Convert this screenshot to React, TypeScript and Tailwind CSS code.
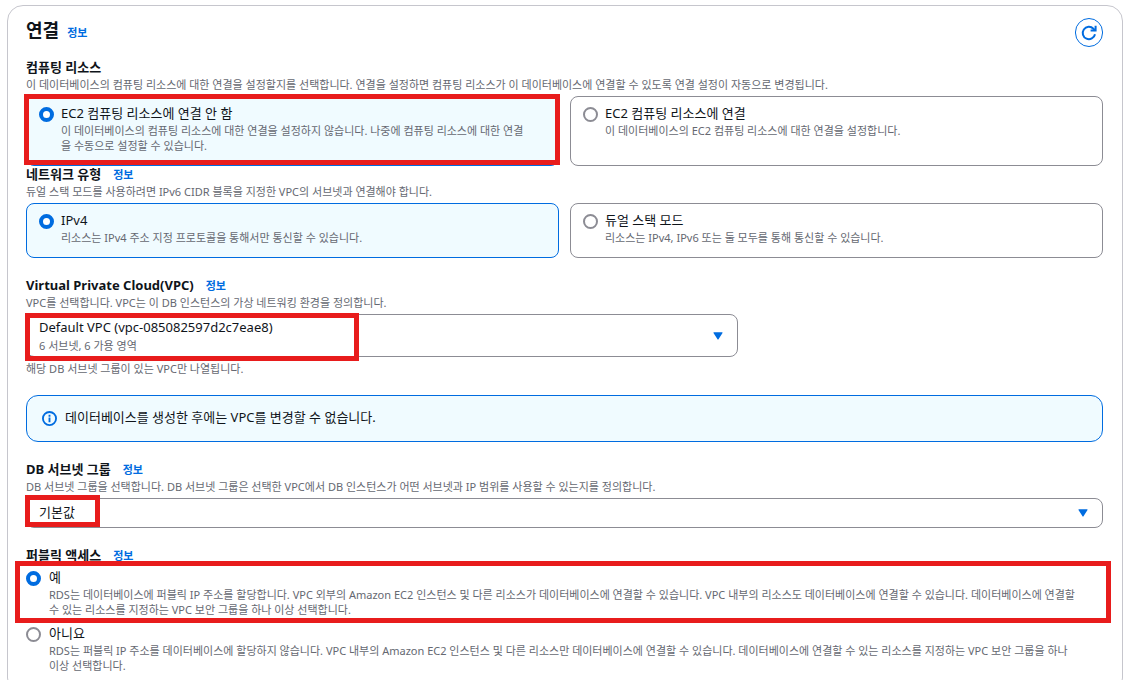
import { useState } from 'react'
import type { ReactNode } from 'react'

function InfoLink({ topic }: { topic: string }) {
  return (
    <a href="#info" aria-label={`${topic} 정보`} className="text-[11px] leading-4 font-bold text-[#006ce0] hover:underline">
      정보
    </a>
  )
}

function FieldHeader({ id, title, htmlFor, info = true, children }: { id: string; title: string; htmlFor?: string; info?: boolean; children?: ReactNode }) {
  return (
    <div>
      <div className="flex h-[18px] items-baseline gap-3 text-[13px] leading-4 font-bold">
        {htmlFor ? <label id={id} htmlFor={htmlFor}>{title}</label> : <span id={id}>{title}</span>}
        {info && <InfoLink topic={title} />}
      </div>
      {children && <p className="text-[11px] leading-[15px] text-[#656871]">{children}</p>}
    </div>
  )
}

// Red box drawn over the part of the form to look at
function Highlight({ className }: { className: string }) {
  return <span aria-hidden="true" className={`pointer-events-none absolute z-10 border-[5px] border-[#e81c1c] ${className}`} />
}

type RadioProps = {
  name: string
  value: string
  title: string
  description: string
  selected: string
  onSelect: (value: string) => void
  tile?: boolean
}

function RadioOption({ name, value, title, description, selected, onSelect, tile }: RadioProps) {
  const checked = selected === value
  const tileStyle = checked
    ? 'gap-[7px] rounded-lg border border-[#006ce0] bg-[#f0fbff] pt-2 pb-3 pl-3'
    : 'gap-[7px] rounded-lg border border-[#8c8c94] bg-white pt-2 pb-3 pl-3'

  return (
    <label className={`flex h-full cursor-pointer items-start pr-7 ${tile ? tileStyle : 'gap-2'}`}>
      <input
        type="radio"
        name={name}
        value={value}
        checked={checked}
        onChange={() => onSelect(value)}
        className="mt-0.5 size-[15px] shrink-0 appearance-none rounded-full border-2 border-[#8c8c94] bg-white checked:border-4 checked:border-[#006ce0]"
      />
      <span className="min-w-0">
        <span className="block pb-0.5 text-[13px] leading-4">{title}</span>
        <span className="block text-[11px] leading-[15px] text-[#656871]">{description}</span>
      </span>
    </label>
  )
}

function Caret() {
  return (
    <svg viewBox="0 0 10 8" aria-hidden="true" className="pointer-events-none col-start-1 row-start-1 mr-[15px] h-2 w-2.5 self-center justify-self-end fill-[#006ce0]">
      <path d="M1 .2h8c.5 0 .8.5.5.9l-4 6.2a.6.6 0 0 1-1 0l-4-6.2C.2.7.5.2 1 .2z" />
    </svg>
  )
}

export default function App() {
  const [compute, setCompute] = useState('none')
  const [network, setNetwork] = useState('ipv4')
  const [access, setAccess] = useState('yes')

  return (
    <main className="bg-white pt-[5px] pr-[3px] pl-[7px] font-['Noto_Sans','Noto_Sans_CJK_KR',sans-serif] text-[#0f141a]">
      <section className="rounded-2xl border border-[#c6c6cd] pt-3 pr-[19px] pb-5 pl-[18px]">
        <header className="flex items-start justify-between">
          <div className="flex items-baseline gap-2">
            <h2 className="text-lg leading-6 font-bold">연결</h2>
            <InfoLink topic="연결" />
          </div>
          <button type="button" aria-label="새로 고침" className="flex h-[29px] w-7 items-center justify-center rounded-full border border-[#006ce0] text-[#006ce0]">
            <svg viewBox="0 0 16 16" fill="none" stroke="currentColor" strokeWidth="2" className="size-4 shrink-0">
              <path d="M14 9.2A6.2 6.2 0 1 1 12.4 3.7L14.4 5.4" />
              <path d="M14.6 .8v4.8H9.6" />
            </svg>
          </button>
        </header>

        <div role="radiogroup" aria-labelledby="compute" className="mt-3">
          <FieldHeader id="compute" title="컴퓨팅 리소스" info={false}>
            이 데이터베이스의 컴퓨팅 리소스에 대한 연결을 설정할지를 선택합니다. 연결을 설정하면 컴퓨팅 리소스가 이 데이터베이스에 연결할 수 있도록 연결 설정이 자동으로 변경됩니다.
          </FieldHeader>
          <div className="mt-1 grid grid-cols-2 gap-[11px]">
            <div className="relative">
              <RadioOption
                tile
                name="compute"
                value="none"
                title="EC2 컴퓨팅 리소스에 연결 안 함"
                description="이 데이터베이스의 컴퓨팅 리소스에 대한 연결을 설정하지 않습니다. 나중에 컴퓨팅 리소스에 대한 연결을 수동으로 설정할 수 있습니다."
                selected={compute}
                onSelect={setCompute}
              />
              <Highlight className="-top-0.5 -right-px bottom-px -left-0.5" />
            </div>
            <RadioOption
              tile
              name="compute"
              value="ec2"
              title="EC2 컴퓨팅 리소스에 연결"
              description="이 데이터베이스의 EC2 컴퓨팅 리소스에 대한 연결을 설정합니다."
              selected={compute}
              onSelect={setCompute}
            />
          </div>
        </div>

        <div role="radiogroup" aria-labelledby="network">
          <FieldHeader id="network" title="네트워크 유형">
            듀얼 스택 모드를 사용하려면 IPv6 CIDR 블록을 지정한 VPC의 서브넷과 연결해야 합니다.
          </FieldHeader>
          <div className="mt-1 grid grid-cols-2 gap-[11px]">
            <RadioOption
              tile
              name="network"
              value="ipv4"
              title="IPv4"
              description="리소스는 IPv4 주소 지정 프로토콜을 통해서만 통신할 수 있습니다."
              selected={network}
              onSelect={setNetwork}
            />
            <RadioOption
              tile
              name="network"
              value="dual"
              title="듀얼 스택 모드"
              description="리소스는 IPv4, IPv6 또는 둘 모두를 통해 통신할 수 있습니다."
              selected={network}
              onSelect={setNetwork}
            />
          </div>
        </div>

        <div className="mt-[19px]">
          <FieldHeader id="vpc-label" htmlFor="vpc" title="Virtual Private Cloud(VPC)">
            VPC를 선택합니다. VPC는 이 DB 인스턴스의 가상 네트워킹 환경을 정의합니다.
          </FieldHeader>
          <div className="mt-1 grid grid-cols-3 gap-[18px]">
            <div className="relative col-span-2 grid">
              <select
                id="vpc"
                aria-describedby="vpc-detail"
                className="col-start-1 row-start-1 h-[43px] w-full appearance-none rounded-lg border border-[#8c8c94] bg-white pr-10 pb-[18px] pl-3 text-[13px] leading-4"
              >
                <option>Default VPC (vpc-085082597d2c7eae8)</option>
              </select>
              <span id="vpc-detail" className="pointer-events-none col-start-1 row-start-1 self-end pb-1 pl-[13px] text-[11px] leading-[15px] text-[#656871]">
                6 서브넷, 6 가용 영역
              </span>
              <Caret />
              <Highlight className="-top-px -bottom-1 -left-px w-[334px]" />
            </div>
          </div>
          <p className="mt-1 text-[11px] leading-[15px] text-[#656871]">해당 DB 서브넷 그룹이 있는 VPC만 나열됩니다.</p>
        </div>

        <div className="mt-[19px] flex items-center gap-2 rounded-xl border border-[#006ce0] bg-[#f0fbff] px-[15px] py-3">
          <svg viewBox="0 0 16 16" fill="none" stroke="#006ce0" strokeWidth="2" className="size-[15px] shrink-0" aria-hidden="true">
            <circle cx="8" cy="8" r="7" />
            <path d="M8 4v2M8 7v5" />
          </svg>
          <p className="pb-0.5 text-[13px] leading-[19px]">데이터베이스를 생성한 후에는 VPC를 변경할 수 없습니다.</p>
        </div>

        <div className="mt-[19px]">
          <FieldHeader id="subnet-label" htmlFor="subnet" title="DB 서브넷 그룹">
            DB 서브넷 그룹을 선택합니다. DB 서브넷 그룹은 선택한 VPC에서 DB 인스턴스가 어떤 서브넷과 IP 범위를 사용할 수 있는지를 정의합니다.
          </FieldHeader>
          <div className="relative mt-1 grid">
            <select
              id="subnet"
              className="col-start-1 row-start-1 h-[30px] w-full appearance-none rounded-lg border border-[#8c8c94] bg-white pr-10 pb-0.5 pl-3 text-[13px] leading-4"
            >
              <option>기본값</option>
            </select>
            <Caret />
            <Highlight className="-top-[3px] bottom-px -left-px w-[75px]" />
          </div>
        </div>

        <div role="radiogroup" aria-labelledby="access" className="mt-[19px]">
          <FieldHeader id="access" title="퍼블릭 액세스" />
          <div className="mt-1 flex flex-col gap-2">
            <div className="relative">
              <RadioOption
                name="access"
                value="yes"
                title="예"
                description="RDS는 데이터베이스에 퍼블릭 IP 주소를 할당합니다. VPC 외부의 Amazon EC2 인스턴스 및 다른 리소스가 데이터베이스에 연결할 수 있습니다. VPC 내부의 리소스도 데이터베이스에 연결할 수 있습니다. 데이터베이스에 연결할 수 있는 리소스를 지정하는 VPC 보안 그룹을 하나 이상 선택합니다."
                selected={access}
                onSelect={setAccess}
              />
              <Highlight className="-top-2 -right-2 -bottom-[6px] -left-[11px]" />
            </div>
            <RadioOption
              name="access"
              value="no"
              title="아니요"
              description="RDS는 퍼블릭 IP 주소를 데이터베이스에 할당하지 않습니다. VPC 내부의 Amazon EC2 인스턴스 및 다른 리소스만 데이터베이스에 연결할 수 있습니다. 데이터베이스에 연결할 수 있는 리소스를 지정하는 VPC 보안 그룹을 하나 이상 선택합니다."
              selected={access}
              onSelect={setAccess}
            />
          </div>
        </div>
      </section>
    </main>
  )
}
